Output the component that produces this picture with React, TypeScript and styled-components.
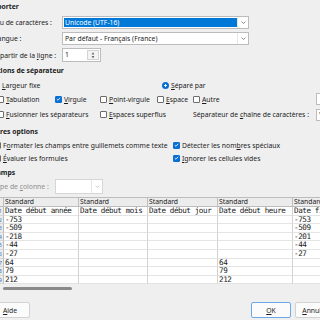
import styled, { createGlobalStyle } from "styled-components";

const GlobalStyle = createGlobalStyle`
  html, body {
    margin: 0;
    padding: 0;
    background: #efefef;
  }

  body {
    font-family: "Noto Sans", "DejaVu Sans", sans-serif;
    font-size: 6.8px;
    color: #1b1b1b;
    overflow: hidden;
  }
`

const rows = [
    ["Date début année", "Date début mois", "Date début jour", "Date début heure", "Date fin année"],
    ["-753", "", "", "", "-753"],
    ["-509", "", "", "", "-509"],
    ["-218", "", "", "", "-201"],
    ["-44", "", "", "", "-44"],
    ["-27", "", "", "", "-27"],
    ["64", "", "", "64", ""],
    ["79", "", "", "79", ""],
    ["212", "", "", "212", ""],
];

function Chevron({ color }: { color: string }) {
    return (
        <svg width="5" height="3" viewBox="0 0 5 3">
            <path d="M0.5 0.5 L2.5 2.5 L4.5 0.5" fill="none" stroke={color} strokeWidth="0.8" />
        </svg>
    );
}

function CheckBox({ checked }: { checked?: boolean }) {
    return (
        <Box $checked={checked}>
            {checked && (
                <svg width="6" height="6" viewBox="0 0 6 6">
                    <path d="M1 3.2 L2.4 4.5 L5 1.5" fill="none" stroke="#fff" strokeWidth="1" />
                </svg>
            )}
        </Box>
    );
}

export default function App() {
    return (
        <Viewport>
            <GlobalStyle />
            <Dialog>
                <Heading>Importer</Heading>
                <ImportGrid>
                    <span><K>J</K>eu de caractères :</span>
                    <Combo $width={187}>
                        <ComboField $selected>Unicode (UTF-16)</ComboField>
                        <ComboButton><Chevron color="#6a6a6a" /></ComboButton>
                    </Combo>
                    <span><K>L</K>angue :</span>
                    <Combo $width={187}>
                        <ComboField>Par défaut - Français (France)</ComboField>
                        <ComboButton><Chevron color="#6a6a6a" /></ComboButton>
                    </Combo>
                    <span>À partir de la <K>l</K>igne :</span>
                    <Spin>
                        <SpinValue>1</SpinValue>
                        <SpinButtons>
                            <SpinArrow>▲</SpinArrow>
                            <SpinArrow>▼</SpinArrow>
                        </SpinButtons>
                    </Spin>
                </ImportGrid>

                <Heading $top={4}>Options de séparateur</Heading>
                <RadioRow>
                    <Option><Radio /><span><K>L</K>argeur fixe</span></Option>
                    <Option><Radio $checked /><span><K>S</K>éparé par</span></Option>
                </RadioRow>
                <SeparatorGrid>
                    <Option><CheckBox /><span><K>T</K>abulation</span></Option>
                    <Option><CheckBox checked /><span><K>V</K>irgule</span></Option>
                    <Option><CheckBox /><span><K>P</K>oint-virgule</span></Option>
                    <Option><CheckBox /><span><K>E</K>space</span></Option>
                    <Option><CheckBox /><span><K>A</K>utre</span></Option>
                    <TextBox />
                    <Option $span={2}><CheckBox /><span><K>F</K>usionner les séparateurs</span></Option>
                    <Option $span={2}><CheckBox /><span><K>E</K>spaces superflus</span></Option>
                    <Option><span>Séparateur de <K>c</K>haîne de caractères :</span></Option>
                    <TextBox>"</TextBox>
                </SeparatorGrid>

                <Heading $top={6}>Autres options</Heading>
                <OtherGrid>
                    <Option><CheckBox /><span>F<K>o</K>rmater les champs entre guillemets comme texte</span></Option>
                    <Option><CheckBox checked /><span>Détecter les nom<K>b</K>res spéciaux</span></Option>
                    <Option><CheckBox /><span><K>É</K>valuer les formules</span></Option>
                    <Option><CheckBox checked /><span><K>I</K>gnorer les cellules vides</span></Option>
                </OtherGrid>

                <Heading $top={5}>Champs</Heading>
                <TypeRow>
                    <span>Type de <K>c</K>olonne :</span>
                    <Combo $width={48} $disabled>
                        <ComboField />
                        <ComboButton><Chevron color="#c4c4c4" /></ComboButton>
                    </Combo>
                </TypeRow>

                <Preview>
                    <RowHead $header />
                    {rows[0].map((_, i) => <ColHead key={i}>Standard</ColHead>)}
                    {rows.map((row, r) => (
                        <>
                            <RowHead key={`h${r}`}>{r + 1}</RowHead>
                            {row.map((value, c) => <Cell key={`${r}-${c}`}>{value}</Cell>)}
                        </>
                    ))}
                </Preview>
                <ScrollTrack><ScrollThumb /></ScrollTrack>

                <ButtonRow>
                    <HelpButton><K>A</K>ide</HelpButton>
                    <Button $default><K>O</K>K</Button>
                    <Button><K>A</K>nnuler</Button>
                </ButtonRow>
            </Dialog>
        </Viewport>
    );
}

const Viewport = styled.div`
    width: 320px;
    height: 320px;
    overflow: hidden;
    background: #efefef;
`

const Dialog = styled.div`
    display: flex;
    flex-direction: column;
    width: 360px;
    margin-left: -12px;
    padding-top: 2px;
    white-space: nowrap;
`

const K = styled.span`
    text-decoration: underline;
    text-underline-offset: 1px;
`

const Heading = styled.div<{ $top?: number }>`
    height: 10px;
    line-height: 10px;
    margin-top: ${({ $top }) => $top ?? 0}px;
    font-weight: 700;
`

const ImportGrid = styled.div`
    display: grid;
    grid-template-columns: 68px auto;
    grid-template-rows: 13px 13px 14px;
    row-gap: 3px;
    align-items: center;
    justify-items: start;

    margin-top: 4px;
    padding-left: 6px;
`

const Combo = styled.div<{ $width: number; $disabled?: boolean }>`
    display: flex;
    box-sizing: border-box;
    width: ${({ $width }) => $width}px;
    height: ${({ $disabled }) => $disabled ? 15 : 13}px;

    border: 1px solid ${({ $disabled }) => $disabled ? "#d6d6d6" : "#bcbcbc"};
    background: #fff;
`

const ComboField = styled.div<{ $selected?: boolean }>`
    flex: 1;
    margin: 1px 0 1px 1px;
    padding-left: 1px;

    line-height: 9px;
    background: ${({ $selected }) => $selected ? "#0078d7" : "transparent"};
    color: ${({ $selected }) => $selected ? "#fff" : "#1b1b1b"};
`

const ComboButton = styled.div`
    display: flex;
    width: 10px;
    align-items: center;
    justify-content: center;

    border-left: 1px solid #e6e6e6;
`

const Spin = styled.div`
    display: flex;
    box-sizing: border-box;
    width: 39px;
    height: 14px;

    border: 1px solid #bcbcbc;
    background: #fff;
`

const SpinValue = styled.div`
    flex: 1;
    padding-left: 2px;
    line-height: 12px;
`

const SpinButtons = styled.div`
    display: flex;
    flex-direction: column;
    width: 10px;
    margin: 1px;

    border: 1px solid #d4d4d4;
    background: #f4f4f4;
`

const SpinArrow = styled.div`
    display: flex;
    flex: 1;
    align-items: center;
    justify-content: center;

    font-size: 3px;
    color: #5a5a5a;
`

const RadioRow = styled.div`
    display: grid;
    grid-template-columns: 169px auto;
    height: 10px;
    align-items: center;

    margin-top: 4px;
    padding-left: 5px;
`

const Option = styled.div<{ $span?: number }>`
    display: flex;
    align-items: center;
    gap: 2px;
    grid-column: span ${({ $span }) => $span ?? 1};
`

const Radio = styled.span<{ $checked?: boolean }>`
    box-sizing: border-box;
    width: 7px;
    height: 7px;
    border-radius: 50%;

    border: ${({ $checked }) => $checked ? "2px solid #0a6fd3" : "1px solid #6c6c6c"};
    background: ${({ $checked }) => $checked ? "radial-gradient(circle, #fff 0 1px, #0a6fd3 1.3px)" : "#fff"};
`

const Box = styled.span<{ $checked?: boolean }>`
    display: flex;
    box-sizing: border-box;
    width: 7px;
    height: 7px;
    align-items: center;
    justify-content: center;

    border: 1px solid ${({ $checked }) => $checked ? "#0a6fd3" : "#6c6c6c"};
    border-radius: 1px;
    background: ${({ $checked }) => $checked ? "#0a6fd3" : "#fff"};
`

const SeparatorGrid = styled.div`
    display: grid;
    grid-template-columns: 58px 45px 57px 36px 123px 40px;
    grid-template-rows: 12px 13px;
    row-gap: 3px;
    align-items: center;

    margin-top: 3px;
    padding-left: 9px;
`

const TextBox = styled.div`
    box-sizing: border-box;
    height: 12px;
    padding-left: 2px;

    border: 1px solid #bcbcbc;
    background: #fff;
    line-height: 10px;
`

const OtherGrid = styled.div`
    display: grid;
    grid-template-columns: 179px auto;
    grid-template-rows: 10px 10px;
    row-gap: 3px;
    align-items: center;

    margin-top: 3px;
    padding-left: 6px;
`

const TypeRow = styled.div`
    display: grid;
    grid-template-columns: 62px auto;
    height: 15px;
    align-items: center;

    margin-top: 1px;
    padding-left: 5px;
    color: #8e8e8e;
`

const Preview = styled.div`
    display: grid;
    grid-template-columns: 16px 75px 69px 70px 75px 80px;
    grid-template-rows: 9px repeat(9, 8.6px);

    margin-top: 3px;
    border-top: 1px solid #bdbdbd;
`

const RowHead = styled.div<{ $header?: boolean }>`
    box-sizing: border-box;
    padding-right: 1px;

    text-align: right;
    font-size: 5.5px;
    line-height: 8px;
    color: #3c78c0;

    background: #ececec;
    border-right: 1px solid #bdbdbd;
    border-bottom: 1px solid ${({ $header }) => $header ? "#bdbdbd" : "#d6d6d6"};
`

const ColHead = styled.div`
    box-sizing: border-box;
    padding-left: 1px;
    line-height: 8px;

    background: #ececec;
    border-right: 1px solid #bdbdbd;
    border-bottom: 1px solid #bdbdbd;
`

const Cell = styled.div`
    box-sizing: border-box;
    padding-left: 1px;
    overflow: hidden;

    font-family: "DejaVu Sans Mono", "Liberation Mono", monospace;
    font-size: 7.6px;
    letter-spacing: -0.42px;
    line-height: 8px;

    background: #fff;
    border-right: 1px solid #d2d2d2;
    border-bottom: 1px solid #e4e4e4;
`

const ScrollTrack = styled.div`
    height: 4px;
    margin-top: 3px;
    padding-left: 15px;
`

const ScrollThumb = styled.div`
    width: 69px;
    height: 3px;
    border-radius: 2px;
    background: #8a8a8a;
`

const ButtonRow = styled.div`
    display: flex;
    gap: 4px;
    width: 345px;
    margin-top: 11px;
    padding-left: 2px;
`

const Button = styled.div<{ $default?: boolean }>`
    display: flex;
    box-sizing: border-box;
    width: 40px;
    height: 16px;
    align-items: center;
    justify-content: center;

    border: 1px solid ${({ $default }) => $default ? "#6aa8e8" : "#d2d2d2"};
    border-radius: 2px;
    background: #fbfbfb;
`

const HelpButton = styled(Button)`
    margin-right: auto;
`
